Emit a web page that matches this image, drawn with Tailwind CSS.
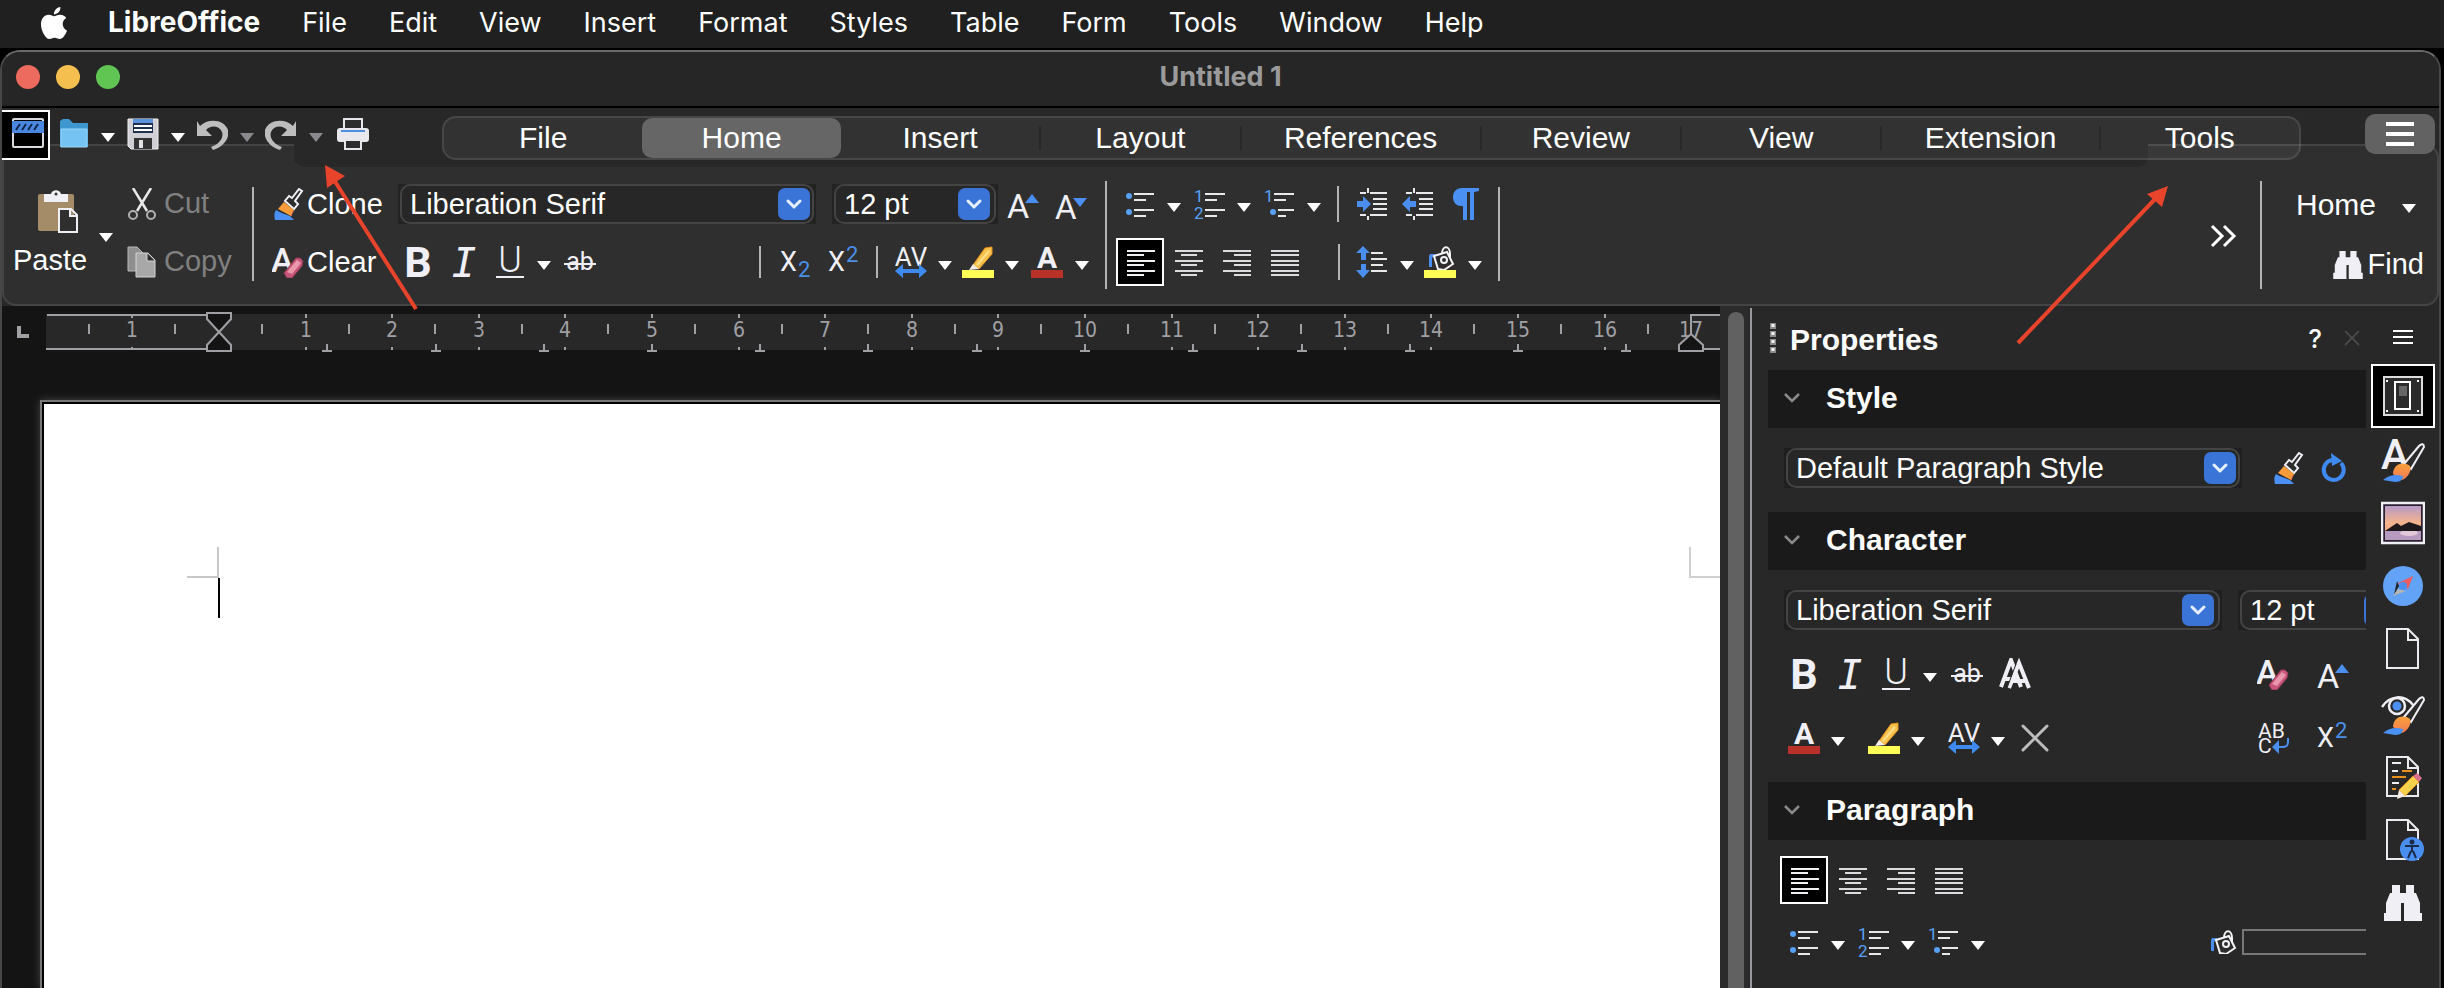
<!DOCTYPE html>
<html lang="en">
<head>
<meta charset="utf-8">
<title>Untitled 1 - LibreOffice Writer</title>
<script src="https://cdn.jsdelivr.net/npm/@tailwindcss/browser@4"></script>
</head>
<body class="flex h-screen flex-col overflow-hidden bg-black font-['Liberation_Sans',Arial,sans-serif] text-white">

<!-- Gradients live in a rendered svg so that they resolve; symbols can stay hidden -->
<svg class="absolute size-0" aria-hidden="true">
  <defs>
    <linearGradient id="sky" x1="0" y1="0" x2="0" y2="1"><stop offset="0" stop-color="#b79ac8"/><stop offset=".65" stop-color="#f5b48c"/><stop offset="1" stop-color="#f3a77f"/></linearGradient>
    <linearGradient id="brushfill" x1="0" y1="0" x2="0" y2="1"><stop offset="0" stop-color="#f9a13a"/><stop offset="1" stop-color="#f07a55"/></linearGradient>
  </defs>
</svg>
<svg class="hidden" aria-hidden="true">
  <symbol id="drop" viewBox="0 0 14 32"><path fill="currentColor" d="M0 15h14l-7 9z"/></symbol>
  <symbol id="bold" viewBox="0 0 32 32"><text x="16" y="31" text-anchor="middle" font-family="Roboto" font-weight="700" font-size="43" fill="#f0eff6">B</text></symbol>
  <symbol id="italic" viewBox="0 0 32 32"><text x="16" y="31" text-anchor="middle" font-family="DejaVu Sans Mono" font-style="italic" font-size="41" fill="#f0eff6">I</text></symbol>
  <symbol id="under" viewBox="0 0 32 32"><text x="16" y="26" text-anchor="middle" font-family="Roboto" font-weight="300" font-size="36" fill="#f0eff6">U</text><path d="M2 31h28" stroke="#f0eff6" stroke-width="2"/></symbol>
  <symbol id="strike" viewBox="0 0 32 32"><text x="16" y="24" text-anchor="middle" font-family="Roboto" font-size="25" fill="#f0eff6">ab</text><path d="M0 18h32" stroke="#f0eff6" stroke-width="2"/></symbol>
  <symbol id="sub" viewBox="0 0 32 32"><text x="0" y="25" font-family="Roboto" font-size="27" fill="#f0eff6">X</text><text x="18" y="31" font-family="Roboto" font-size="22" fill="#4a8fe8">2</text></symbol>
  <symbol id="sup" viewBox="0 0 32 32"><text x="0" y="25" font-family="Roboto" font-size="27" fill="#f0eff6">X</text><text x="18" y="16" font-family="Roboto" font-size="22" fill="#4a8fe8">2</text></symbol>
  <symbol id="kern" viewBox="0 0 32 32"><text x="16" y="20" text-anchor="middle" font-family="Roboto" font-size="26" fill="#f0eff6">AV</text><path fill="#3f8af0" d="M0 25l8-7v5h16v-5l8 7-8 7v-5H8v5z"/></symbol>
  <symbol id="mark" viewBox="0 0 32 32"><path fill="#f8c24e" stroke="#e8921e" d="M23 2l7-1v7L17 23l-6-4z"/><path stroke="#ffe08a" stroke-width="2" d="M27 5L15 19"/><path fill="#f6eee6" d="M11 18l6 5-10 1z"/><path fill="#fdfd55" d="M0 24h32v8H0z"/></symbol>
  <symbol id="colorA" viewBox="0 0 32 32"><text x="16" y="22" text-anchor="middle" font-family="Roboto" font-weight="700" font-size="30" fill="#f0eff6">A</text><path fill="#b8322a" d="M0 24h32v8H0z"/></symbol>
  <symbol id="grow" viewBox="0 0 32 32"><text x="0" y="30" font-family="Roboto" font-size="34" fill="#f0eff6">A</text><path fill="#4a8ff0" d="M18 15l7-9 7 9z"/></symbol>
  <symbol id="shrink" viewBox="0 0 32 32"><text x="0" y="31" font-family="Roboto" font-size="33" fill="#f0eff6">A</text><path fill="#4a8ff0" d="M18 10h14l-7 9z"/></symbol>
  <symbol id="bullets" viewBox="0 0 32 32"><g fill="#58a0f5"><circle cx="5" cy="8" r="3"/><circle cx="5" cy="24" r="3"/></g><path stroke="#e9e9ec" stroke-width="2" d="M10 6h20M10 12h12M10 22h20M10 28h12"/></symbol>
  <symbol id="numbers" viewBox="0 0 32 32"><g font-family="Roboto" font-size="17" fill="#58a0f5"><text x="0" y="14">1</text><text x="0" y="31">2</text></g><path stroke="#e9e9ec" stroke-width="2" d="M11 6h20M11 12h12M11 22h20M11 28h12"/></symbol>
  <symbol id="outline" viewBox="0 0 32 32"><text x="0" y="14" font-family="Roboto" font-size="17" fill="#58a0f5">1</text><circle cx="9" cy="24" r="3" fill="#58a0f5"/><path stroke="#e9e9ec" stroke-width="2" d="M10 6h20M10 12h12M14 22h16M14 28h8"/></symbol>
  <symbol id="indent" viewBox="0 0 32 32"><path stroke="#e9e9ec" stroke-width="2" d="M4 5h6M14 5h17M17 11h14M17 16h14M17 21h14M4 27h6M14 27h17M12 0v5M12 28v4"/><path fill="#4a8ff0" d="M1 13h6V8l8 8-8 8v-5H1z"/></symbol>
  <symbol id="outdent" viewBox="0 0 32 32"><path stroke="#e9e9ec" stroke-width="2" d="M4 5h6M14 5h17M17 11h14M17 16h14M17 21h14M4 27h6M14 27h17M12 0v5M12 28v4"/><path fill="#4a8ff0" d="M14 13H8V8l-8 8 8 8v-5h6z"/></symbol>
  <symbol id="pilcrow" viewBox="0 0 32 32"><path fill="#4a90f2" d="M29 0v3l-5 1v28h-4V4h-3v28h-4V18h-2C6 18 3 14 3 9s3-9 9-9z"/></symbol>
  <symbol id="al" viewBox="0 0 32 32"><path stroke="#efeff2" stroke-width="2" d="M3 5h28M3 9h17M3 15h28M3 19h17M3 25h28M3 29h17"/></symbol>
  <symbol id="ac" viewBox="0 0 32 32"><path stroke="#dcdcdf" stroke-width="2" d="M3 5h28M9 9h16M3 15h28M9 19h16M3 25h28M9 29h16"/></symbol>
  <symbol id="ar" viewBox="0 0 32 32"><path stroke="#dcdcdf" stroke-width="2" d="M3 5h28M14 9h17M3 15h28M14 19h17M3 25h28M14 29h17"/></symbol>
  <symbol id="aj" viewBox="0 0 32 32"><path stroke="#dcdcdf" stroke-width="2" d="M3 5h28M3 9h28M3 15h28M3 19h28M3 25h28M3 29h28"/></symbol>
  <symbol id="spacing" viewBox="0 0 32 32"><path fill="#4a8ff0" d="M7 0l7 7h-4v7H5V7H0zM7 32l7-8h-4v-6H5v6H0z"/><path stroke="#e9e9ec" stroke-width="2" d="M15 7h12M15 13h16M15 19h12M15 25h16"/></symbol>
  <symbol id="bucketTop" viewBox="0 0 32 24"><path fill="#4a8ff0" d="M6 8h6l-4 4v9H5V10z"/><path fill="#2d2d2d" stroke="#f4f4f6" stroke-width="2" d="M10 10l13-4 6 12-9 6-6-1z"/><path fill="none" stroke="#f4f4f6" stroke-width="2" d="M18 8c0-9 8-9 8 0v4"/><circle cx="20" cy="14" r="3" fill="none" stroke="#f4f4f6" stroke-width="2"/></symbol>
  <symbol id="brush" viewBox="0 0 32 32"><path fill="#2d2d2d" stroke="#f0eff6" stroke-width="2" d="M27 1l3 2-7 10 3 3-4 5-9-8 4-5 3 2z"/><path fill="#f69b39" d="M12 14l10 8-3 6-13-7z"/><path stroke="#f06a58" d="M21 23l-2 5"/><path fill="#4a90f5" d="M4 22c5 3 9 4 14 6l4 4H3c-1-4-1-7 1-10z"/></symbol>
  <symbol id="clearA" viewBox="0 0 32 32"><text x="-1" y="26" font-family="Roboto" font-weight="500" font-size="34" fill="#f0eff6">A</text><path fill="#c8567a" stroke="#8f3a55" d="M12 27l12-15h4l3 3-1 5-10 12h-5z"/><path fill="#e998ac" d="M15 26l10-12 4 3-9 11z"/></symbol>
  <symbol id="paste" viewBox="0 0 48 44"><rect x="5" y="5" width="36" height="37" rx="2" fill="#a58c69"/><path fill="#f0eff6" d="M11 5h7c1-5 9-5 10 0h7v8H11z"/><circle cx="23" cy="5" r="1.500" fill="#333"/><path fill="#2f2f2f" stroke="#f0eff6" stroke-width="2" d="M26 20h12l6 6v17H26zM37 20v7h7"/></symbol>
  <symbol id="cut" viewBox="0 0 32 32"><path stroke="#e8e8ea" stroke-width="2.500" d="M7 0l14 23M25 0L11 23"/><circle cx="7" cy="27" r="4" fill="none" stroke="#b0b0b0" stroke-width="2"/><circle cx="25" cy="27" r="4" fill="none" stroke="#b0b0b0" stroke-width="2"/></symbol>
  <symbol id="copy" viewBox="0 0 32 32"><path fill="#8e8e8e" stroke="#b9b9b9" d="M2 1h9l6 6v18H2z"/><path fill="#a8a8a8" stroke="#d4d4d4" d="M10 7h12l7 7v17H10zM21 7v8h8"/></symbol>
  <symbol id="binoc" viewBox="0 0 38 36"><path fill="#f0eff6" d="M8 0h8v8h6V0h8v8h2l4 10v10h2v8H20V18h-3v18H0v-8h2V18L6 8h2z"/></symbol>
  <symbol id="chev" viewBox="0 0 32 32"><path fill="none" stroke="#e6efff" stroke-width="3" stroke-linecap="round" stroke-linejoin="round" d="M10 13l6 6 6-6"/></symbol>
  <symbol id="fold" viewBox="0 0 16 12"><path fill="none" stroke="#8a8a8a" stroke-width="2.500" d="M1 2l7 7 7-7"/></symbol>
</svg>

<!-- macOS menu bar -->
<nav aria-label="Menu bar" class="flex h-12 shrink-0 items-center bg-[#202020] pb-[3px] pl-[38px] font-['Inter',sans-serif] text-[27px]">
  <a href="#" aria-label="Apple" class="mr-[38px]"><svg class="size-8" viewBox="0 0 24 24"><path fill="#fff" d="M12.152 6.896c-.948 0-2.415-1.078-3.960-1.040-2.040.027-3.910 1.183-4.961 3.014-2.117 3.675-.546 9.103 1.519 12.090 1.013 1.454 2.208 3.090 3.792 3.039 1.520-.065 2.090-.987 3.935-.987 1.831 0 2.350.987 3.960.948 1.637-.026 2.676-1.480 3.676-2.948 1.156-1.688 1.636-3.325 1.662-3.415-.039-.013-3.182-1.221-3.220-4.857-.026-3.040 2.480-4.494 2.597-4.559-1.429-2.090-3.623-2.324-4.390-2.376-2-.156-3.675 1.090-4.610 1.090zM15.530 3.830c.843-1.012 1.400-2.427 1.245-3.830-1.207.052-2.662.805-3.532 1.818-.780.896-1.454 2.338-1.273 3.714 1.338.104 2.715-.688 3.559-1.701"/></svg></a>
  <div class="flex items-baseline gap-[42px]">
    <a href="#" class="text-[28px] font-bold">LibreOffice</a><a href="#">File</a><a href="#">Edit</a><a href="#">View</a><a href="#">Insert</a><a href="#">Format</a><a href="#">Styles</a><a href="#">Table</a><a href="#">Form</a><a href="#">Tools</a><a href="#">Window</a><a href="#">Help</a>
  </div>
</nav>

<!-- Application window -->
<div class="relative mt-[2px] mr-[3px] flex min-h-0 flex-1 flex-col overflow-hidden rounded-t-[20px] border-x-2 border-t-2 border-x-[#474747] border-t-[#6a6a6a] bg-[#282828]">

  <header class="grid h-14 shrink-0 grid-cols-[1fr_auto_1fr] items-center border-b-2 border-black bg-[#262626] px-[14px] pb-1">
    <div class="flex gap-4">
      <button aria-label="Close" class="size-6 rounded-full bg-[#ec6a5e]"></button>
      <button aria-label="Minimize" class="size-6 rounded-full bg-[#f4bf4f]"></button>
      <button aria-label="Zoom" class="size-6 rounded-full bg-[#61c554]"></button>
    </div>
    <h1 class="font-['Inter',sans-serif] text-[27px] font-bold text-[#9b9b9b]">Untitled 1</h1>
  </header>

  <section aria-label="Notebookbar" class="relative shrink-0">
    <div class="absolute inset-x-0 top-9 bottom-0 rounded-[14px] border-2 border-[#444] bg-[#2f2f2f]"></div>
    <div class="absolute top-9 right-[291px] left-[292px] h-[23px] rounded-b-[10px] bg-[#282828]"></div>

    <!-- Quick access and tabs -->
    <div class="relative flex items-start pt-[2px]">
      <div class="-ml-[2px] flex w-[442px] shrink-0 items-start">
        <button aria-label="Templates" class="flex size-[50px] shrink-0 items-center justify-center border-2 border-white bg-black pb-1 pl-1.5"><svg class="h-[30px] w-8" viewBox="0 0 32 30"><rect x="1" y="1" width="30" height="28" rx="1" fill="none" stroke="#dcd9de" stroke-width="2"/><path fill="#4a88e0" d="M0 3h32v12H0z"/><path stroke="#10254d" stroke-width="2" d="M4 12l4-6M10 12l4-6M16 12l4-6M22 12l4-6"/></svg></button>
        <button aria-label="Open" class="mt-2 ml-2 flex items-center gap-[11px]"><svg class="size-8" viewBox="0 0 32 32"><path fill="#3f97cf" d="M2 3l3-2h6l4 4h15v24H2z"/><path fill="#74c3f2" stroke="#9ad6f8" d="M3 11h26v18H3z"/></svg><svg class="h-8 w-[14px]"><use href="#drop"/></svg></button>
        <button aria-label="Save" class="mt-2 ml-3 flex items-center gap-3"><svg class="size-8" viewBox="0 0 32 32"><path fill="#d0cfd6" stroke="#f0f0f3" d="M1 1h30v30H4l-3-3z"/><path fill="#20304f" d="M6 2h20v13H6z"/><path fill="#5d92dc" d="M6 1h20v4H6z"/><path stroke="#fff" stroke-width="2" d="M7 8h18M7 12h18"/><path fill="#333" d="M7 20h18v11H7z"/><path fill="#e4e4e8" d="M12 22h4v8h-4z"/></svg><svg class="h-8 w-[14px]"><use href="#drop"/></svg></button>
        <button aria-label="Undo" disabled class="mt-2 ml-[11px] flex items-center gap-3 text-[#8a8a8e]"><svg class="size-8" viewBox="0 0 32 32"><path fill="#bdbdbd" d="M1 3l3 5C12 0 28 1 32 12c2 9-5 17-15 20l-2-3c8-3 13-9 11-15C23 7 14 7 10 12l6 6H1z"/></svg><svg class="h-8 w-[14px]"><use href="#drop"/></svg></button>
        <button aria-label="Redo" disabled class="mt-2 ml-[11px] flex items-center gap-3 text-[#8a8a8e]"><svg class="size-8" viewBox="0 0 32 32"><path fill="#bdbdbd" d="M31 3l-3 5C20 0 4 1 0 12c-2 9 5 17 15 20l2-3C9 26 4 20 6 14 9 7 18 7 22 12l-6 6h15z"/></svg><svg class="h-8 w-[14px]"><use href="#drop"/></svg></button>
        <button aria-label="Print" class="mt-2 ml-3.5"><svg class="size-8" viewBox="0 0 32 32"><path fill="#2d2d2d" stroke="#e8e6ea" stroke-width="2" d="M7 1h18v13H7z"/><rect x="0" y="10" width="32" height="14" rx="3" fill="#e8e8ee"/><path stroke="#4c8fe0" stroke-width="2" d="M4 13h24"/><path fill="#2d2d2d" stroke="#e8e6ea" stroke-width="2" d="M8 22h16v9H8z"/></svg></button>
      </div>
      <div role="tablist" class="mt-[6px] flex h-11 grow items-center rounded-[14px] border-2 border-white/10 bg-white/5 text-[30px]">
        <button role="tab" class="h-6 basis-0 grow-[200] leading-6">File</button>
        <button role="tab" aria-selected="true" class="h-10 basis-0 grow-[200] rounded-[10px] bg-[#666] leading-6">Home</button>
        <button role="tab" class="h-6 basis-0 grow-[200] border-r-2 border-black/20 leading-6">Insert</button>
        <button role="tab" class="h-6 basis-0 grow-[200] border-r-2 border-black/20 leading-6">Layout</button>
        <button role="tab" class="h-6 basis-0 grow-[240] border-r-2 border-black/20 leading-6">References</button>
        <button role="tab" class="h-6 basis-0 grow-[200] border-r-2 border-black/20 leading-6">Review</button>
        <button role="tab" class="h-6 basis-0 grow-[200] border-r-2 border-black/20 leading-6">View</button>
        <button role="tab" class="h-6 basis-0 grow-[218] border-r-2 border-black/20 leading-6">Extension</button>
        <button role="tab" class="h-6 basis-0 grow-[200] leading-6">Tools</button>
      </div>
      <button aria-label="Menu" class="mt-1 mr-1 ml-16 flex h-10 w-[70px] shrink-0 flex-col items-center justify-center gap-1.5 rounded-[10px] bg-[#626262]"><span class="h-1 w-7 bg-white"></span><span class="h-1 w-7 bg-white"></span><span class="h-1 w-7 bg-white"></span></button>
    </div>

    <!-- Home tab tools -->
    <div class="relative flex h-[146px] items-start pt-[15px] text-[29px]">
      <button class="mt-3.5 ml-1 flex w-[88px] flex-col items-center leading-8"><svg class="ml-3.5 h-11 w-12"><use href="#paste"/></svg><span class="mt-[11px]">Paste</span></button>
      <button aria-label="Paste options" class="mt-[43px] ml-[5px]"><svg class="h-8 w-[14px]"><use href="#drop"/></svg></button>
      <div class="ml-[13px] flex w-[126px] flex-col text-[#808080]">
        <button disabled class="flex h-[58px] items-center gap-[6px]"><svg class="size-8"><use href="#cut"/></svg>Cut</button>
        <button disabled class="flex h-[58px] items-center gap-[6px]"><svg class="size-8"><use href="#copy"/></svg>Copy</button>
      </div>
      <div class="mt-3 h-[94px] w-[2px] bg-[#b4b4b4]"></div>
      <div class="ml-[18px] flex w-[126px] flex-col">
        <button class="flex h-[58px] items-center gap-[3px]"><svg class="size-8"><use href="#brush"/></svg><span class="pt-[2px]">Clone</span></button>
        <button class="flex h-[58px] items-center gap-[3px]"><svg class="size-8"><use href="#clearA"/></svg><span class="pt-[2px]">Clear</span></button>
      </div>

      <div class="flex flex-col">
        <div class="flex h-[58px] items-center">
          <div class="relative w-[418px] bg-[#232323] px-[2px]"><select aria-label="Font name" class="block h-10 w-full appearance-none rounded-[10px] border-2 border-[#444] bg-[#272727] pl-[8px] leading-9"><option>Liberation Serif</option></select><svg class="pointer-events-none absolute top-1 right-1.5 size-8 rounded-[7px] bg-[#3a74d6]"><use href="#chev"/></svg></div>
          <div class="relative ml-4 w-[166px] bg-[#232323] px-[2px]"><select aria-label="Font size" class="block h-10 w-full appearance-none rounded-[10px] border-2 border-[#444] bg-[#272727] pl-[8px] leading-9"><option>12 pt</option></select><svg class="pointer-events-none absolute top-1 right-2 size-8 rounded-[7px] bg-[#3a74d6]"><use href="#chev"/></svg></div>
          <button aria-label="Increase size" class="ml-[9px]"><svg class="size-8"><use href="#grow"/></svg></button>
          <button aria-label="Decrease size" class="ml-4"><svg class="size-8"><use href="#shrink"/></svg></button>
        </div>
        <div class="flex h-[58px] items-center pl-1">
          <button aria-label="Bold"><svg class="size-8"><use href="#bold"/></svg></button>
          <button aria-label="Italic" class="ml-3.5"><svg class="size-8"><use href="#italic"/></svg></button>
          <button aria-label="Underline" class="ml-3.5 flex gap-[11px]"><svg class="size-8"><use href="#under"/></svg><svg class="h-8 w-[14px]"><use href="#drop"/></svg></button>
          <button aria-label="Strikethrough" class="ml-[13px]"><svg class="size-8"><use href="#strike"/></svg></button>
          <div class="ml-[163px] h-8 w-[2px] bg-[#b4b4b4]"></div>
          <button aria-label="Subscript" class="ml-[19px]"><svg class="size-8"><use href="#sub"/></svg></button>
          <button aria-label="Superscript" class="ml-4"><svg class="size-8"><use href="#sup"/></svg></button>
          <div class="ml-4 h-8 w-[2px] bg-[#b4b4b4]"></div>
          <button aria-label="Character spacing" class="ml-[17px] flex gap-[11px]"><svg class="size-8"><use href="#kern"/></svg><svg class="h-8 w-[14px]"><use href="#drop"/></svg></button>
          <button aria-label="Highlighting" class="ml-[10px] flex gap-[11px]"><svg class="size-8"><use href="#mark"/></svg><svg class="h-8 w-[14px]"><use href="#drop"/></svg></button>
          <button aria-label="Font color" class="ml-[12px] flex gap-3"><svg class="size-8"><use href="#colorA"/></svg><svg class="h-8 w-[14px]"><use href="#drop"/></svg></button>
        </div>
      </div>
      <div class="mt-1.5 ml-4 h-[108px] w-[2px] bg-[#b4b4b4]"></div>

      <div class="ml-[9px] flex flex-col">
        <div class="flex h-[58px] items-center pl-2">
          <button aria-label="Bullets" class="flex gap-[11px]"><svg class="size-8"><use href="#bullets"/></svg><svg class="h-8 w-[14px]"><use href="#drop"/></svg></button>
          <button aria-label="Numbering" class="ml-[13px] flex gap-[11px]"><svg class="size-8"><use href="#numbers"/></svg><svg class="h-8 w-[14px]"><use href="#drop"/></svg></button>
          <button aria-label="Outline" class="ml-[13px] flex gap-[11px]"><svg class="size-8"><use href="#outline"/></svg><svg class="h-8 w-[14px]"><use href="#drop"/></svg></button>
          <div class="ml-4 h-9 w-[2px] bg-[#b4b4b4]"></div>
          <button aria-label="Increase indent" class="ml-[17px]"><svg class="size-8"><use href="#indent"/></svg></button>
          <button aria-label="Decrease indent" class="ml-3.5"><svg class="size-8"><use href="#outdent"/></svg></button>
          <button aria-label="Formatting marks" class="ml-4"><svg class="size-8"><use href="#pilcrow"/></svg></button>
        </div>
        <div class="flex h-[58px] items-center">
          <button aria-label="Align left" aria-pressed="true" class="flex size-12 items-center justify-center border-2 border-white bg-black"><svg class="size-8"><use href="#al"/></svg></button>
          <button aria-label="Center" class="flex size-12 items-center justify-center"><svg class="size-8"><use href="#ac"/></svg></button>
          <button aria-label="Align right" class="flex size-12 items-center justify-center"><svg class="size-8"><use href="#ar"/></svg></button>
          <button aria-label="Justify" class="flex size-12 items-center justify-center"><svg class="size-8"><use href="#aj"/></svg></button>
          <div class="ml-[30px] h-9 w-[2px] bg-[#b4b4b4]"></div>
          <button aria-label="Line spacing" class="ml-4 flex gap-3"><svg class="size-8"><use href="#spacing"/></svg><svg class="h-8 w-[14px]"><use href="#drop"/></svg></button>
          <button aria-label="Background color" class="ml-[10px] flex gap-3"><svg class="size-8" viewBox="0 0 32 32"><use href="#bucketTop" width="32" height="24"/><path fill="#fdfd55" d="M0 24h32v8H0z"/></svg><svg class="h-8 w-[14px]"><use href="#drop"/></svg></button>
        </div>
      </div>
      <div class="mt-3 ml-4 h-[94px] w-[2px] bg-[#b4b4b4]"></div>

      <button aria-label="More" class="mt-11 ml-auto"><svg class="size-8" viewBox="0 0 32 32"><path fill="none" stroke="#fff" stroke-width="3" d="M5 7l10 10L5 27M17 7l10 10-10 10"/></svg></button>
      <div class="mt-1.5 ml-[21px] h-[108px] w-[2px] bg-[#b4b4b4]"></div>
      <div class="mt-[2px] flex w-[177px] flex-col pr-[15px]">
        <button class="flex h-[58px] items-center justify-end gap-[26px] pr-2 pb-[3px] text-[30px]">Home<svg class="h-8 w-[14px]"><use href="#drop"/></svg></button>
        <button class="flex h-[58px] items-center justify-end gap-[5px] pt-[2px]"><svg class="h-7 w-[30px]"><use href="#binoc"/></svg>Find</button>
      </div>
    </div>
  </section>

  <div class="flex min-h-0 flex-1">
    <!-- Document -->
    <main class="flex min-w-0 flex-1 flex-col bg-[#141414]">
      <svg id="ruler" class="h-12 w-full shrink-0" role="img" aria-label="Ruler"></svg>
      <div class="flex min-h-0 flex-1 flex-col pt-[46px] pl-[38px]">
        <div class="flex-1 border-t-2 border-l-2 border-[#777] bg-black pt-[2px] pl-[2px] shadow-[0_0_8px_#444]">
          <article contenteditable="true" aria-label="Document page" class="h-full bg-white pt-[143px] outline-none">
            <div class="flex justify-between pl-[143px]">
              <div class="h-[31px] w-8 bg-[linear-gradient(#c8c8c8,#c8c8c8),linear-gradient(#c8c8c8,#c8c8c8)] bg-[length:2px_100%,100%_2px] bg-[position:right_top,left_bottom] bg-no-repeat"></div>
              <div class="h-[31px] w-[31px] border-b-2 border-l-2 border-[#d0d0d0]"></div>
            </div>
            <div class="ml-[174px] h-10 w-[2px] bg-black"></div>
          </article>
        </div>
      </div>
    </main>

    <div class="flex w-7 shrink-0 justify-center bg-[#2b2b2b] pt-1.5 pr-1 pl-2"><div class="w-4 rounded-t-full bg-[#616161]"></div></div>
    <div class="mt-[2px] mr-0.5 ml-[2px] w-[2px] shrink-0 bg-[#9a9a9e]"></div>

    <!-- Sidebar -->
    <aside aria-label="Properties" class="flex w-[685px] shrink-0">
      <div class="flex min-w-0 flex-1 flex-col overflow-hidden pl-[14px]">
        <div class="flex h-16 shrink-0 items-center">
          <svg class="h-8 w-2" viewBox="0 0 8 32"><path stroke="#8a8a8a" stroke-width="6" stroke-dasharray="6 2" d="M5 1v31"/><path stroke="#f0f0f0" stroke-width="3" stroke-dasharray="3 5" d="M5 2v30"/></svg>
          <h2 class="ml-3.5 grow pt-[2px] text-[30px] font-bold">Properties</h2>
          <button aria-label="Help" class="font-['Inter',sans-serif] text-[26px] font-medium">?</button>
          <button aria-label="Close sidebar" class="mr-1 ml-5"><svg class="size-5" viewBox="0 0 20 20"><path stroke="#484848" stroke-width="2" d="M3 3l14 14M17 3L3 17"/></svg></button>
        </div>

        <h3 class="shrink-0 bg-[#1a1a1a]"><button class="flex h-[58px] w-full items-center gap-[26px] pb-[3px] pl-4 text-[30px] font-bold"><svg class="h-3 w-4"><use href="#fold"/></svg>Style</button></h3>
        <div class="flex h-[84px] shrink-0 items-start pt-5 pl-4 text-[29px]">
          <div class="relative w-[458px] bg-[#1f1f1f] px-[2px]"><select aria-label="Paragraph style" class="block h-10 w-full appearance-none rounded-[10px] border-2 border-[#444] bg-[#272727] pl-[8px] leading-9"><option>Default Paragraph Style</option></select><svg class="pointer-events-none absolute top-1 right-1.5 size-8 rounded-[7px] bg-[#3a74d6]"><use href="#chev"/></svg></div>
          <button aria-label="New style" class="mt-1 ml-[30px]"><svg class="size-8"><use href="#brush"/></svg></button>
          <button aria-label="Update style" class="mt-1 ml-[14px]"><svg class="size-8" viewBox="0 0 32 32"><path fill="none" stroke="#3f8af0" stroke-width="4" d="M23 11a10 10 0 1 1-9-3"/><path fill="#3f8af0" d="M13 1l11 8-10 5z"/></svg></button>
        </div>

        <h3 class="shrink-0 bg-[#1a1a1a]"><button class="flex h-[58px] w-full items-center gap-[26px] pb-[3px] pl-4 text-[30px] font-bold"><svg class="h-3 w-4"><use href="#fold"/></svg>Character</button></h3>
        <div class="flex h-[212px] shrink-0 flex-col pt-5 pl-4 text-[29px]">
          <div class="flex">
            <div class="relative w-[438px] shrink-0 bg-[#1f1f1f] px-[2px]"><select aria-label="Sidebar font name" class="block h-10 w-full appearance-none rounded-[10px] border-2 border-[#444] bg-[#272727] pl-[8px] leading-9"><option>Liberation Serif</option></select><svg class="pointer-events-none absolute top-1 right-2 size-8 rounded-[7px] bg-[#3a74d6]"><use href="#chev"/></svg></div>
            <div class="relative ml-4 w-[166px] shrink-0 bg-[#1f1f1f] px-[2px]"><select aria-label="Sidebar font size" class="block h-10 w-full appearance-none rounded-[10px] border-2 border-[#444] bg-[#272727] pl-[8px] leading-9"><option>12 pt</option></select><svg class="pointer-events-none absolute top-1 right-2 size-8 rounded-[7px] bg-[#3a74d6]"><use href="#chev"/></svg></div>
          </div>
          <div class="mt-7 flex pr-[17px] pl-1">
            <button aria-label="Bold"><svg class="size-8"><use href="#bold"/></svg></button>
            <button aria-label="Italic" class="ml-3.5"><svg class="size-8"><use href="#italic"/></svg></button>
            <button aria-label="Underline" class="ml-3.5 flex gap-[11px]"><svg class="size-8"><use href="#under"/></svg><svg class="h-8 w-[14px]"><use href="#drop"/></svg></button>
            <button aria-label="Strikethrough" class="ml-3.5"><svg class="size-8"><use href="#strike"/></svg></button>
            <button aria-label="Shadow" class="ml-4"><svg class="size-8" viewBox="0 0 32 32"><path fill="none" stroke="#f0eff6" stroke-width="4" d="M2 29L12 2l10 27M6 21h12"/><path fill="none" stroke="#f0eff6" stroke-width="4" d="M10 30l10-25 10 25M13 23h14"/><path stroke="#282828" d="M8 30l9-24"/></svg></button>
            <button aria-label="Clear formatting" class="ml-auto"><svg class="size-8"><use href="#clearA"/></svg></button>
            <button aria-label="Increase size" class="ml-7"><svg class="size-8"><use href="#grow"/></svg></button>
          </div>
          <div class="mt-8 flex pr-[17px] pl-1">
            <button aria-label="Font color" class="flex gap-[11px]"><svg class="size-8"><use href="#colorA"/></svg><svg class="h-8 w-[14px]"><use href="#drop"/></svg></button>
            <button aria-label="Highlighting" class="ml-[23px] flex gap-[11px]"><svg class="size-8"><use href="#mark"/></svg><svg class="h-8 w-[14px]"><use href="#drop"/></svg></button>
            <button aria-label="Character spacing" class="ml-[23px] flex gap-[11px]"><svg class="size-8"><use href="#kern"/></svg><svg class="h-8 w-[14px]"><use href="#drop"/></svg></button>
            <button aria-label="No fill" class="ml-3.5"><svg class="size-8" viewBox="0 0 32 32"><path stroke="#bdbdbd" stroke-width="3" stroke-linecap="round" d="M4 4l24 24M28 4L4 28"/></svg></button>
            <button aria-label="Wrap text" class="ml-auto"><svg class="size-8" viewBox="0 0 32 32"><g font-family="Roboto" font-size="21" fill="#f0eff6"><text x="1" y="16">AB</text><text x="1" y="31">C</text></g><path fill="none" stroke="#4a8ff0" stroke-width="2" d="M31 16v4c0 4-2 5-6 5h-4"/><path fill="#4a8ff0" d="M15 25l7-7v14z"/></svg></button>
            <button aria-label="Superscript" class="ml-7"><svg class="size-8"><use href="#sup"/></svg></button>
          </div>
        </div>

        <h3 class="shrink-0 bg-[#1a1a1a]"><button class="flex h-[58px] w-full items-center gap-[26px] pb-[3px] pl-4 text-[30px] font-bold"><svg class="h-3 w-4"><use href="#fold"/></svg>Paragraph</button></h3>
        <div class="flex shrink-0 flex-col gap-[22px] pt-4">
          <div class="flex pl-3">
            <button aria-label="Align left" aria-pressed="true" class="flex size-12 items-center justify-center border-2 border-white bg-black"><svg class="size-8"><use href="#al"/></svg></button>
            <button aria-label="Center" class="flex size-12 items-center justify-center"><svg class="size-8"><use href="#ac"/></svg></button>
            <button aria-label="Align right" class="flex size-12 items-center justify-center"><svg class="size-8"><use href="#ar"/></svg></button>
            <button aria-label="Justify" class="flex size-12 items-center justify-center"><svg class="size-8"><use href="#aj"/></svg></button>
          </div>
          <div class="flex items-center pl-5">
            <button aria-label="Bullets" class="flex gap-[11px]"><svg class="size-8"><use href="#bullets"/></svg><svg class="h-8 w-[14px]"><use href="#drop"/></svg></button>
            <button aria-label="Numbering" class="ml-[13px] flex gap-[11px]"><svg class="size-8"><use href="#numbers"/></svg><svg class="h-8 w-[14px]"><use href="#drop"/></svg></button>
            <button aria-label="Outline" class="ml-[13px] flex gap-[11px]"><svg class="size-8"><use href="#outline"/></svg><svg class="h-8 w-[14px]"><use href="#drop"/></svg></button>
            <label for="fill" class="ml-auto"><svg class="h-6 w-8" role="img" aria-label="Background color"><use href="#bucketTop"/></svg></label>
            <input id="fill" class="ml-1 h-[26px] w-[124px] border-2 border-r-0 border-[#777] bg-transparent">
          </div>
        </div>
      </div>

      <nav aria-label="Sidebar decks" class="flex w-[73px] shrink-0 flex-col items-center">
        <button aria-label="Sidebar settings" class="flex h-[58px] w-16 items-center justify-center pt-1"><svg class="h-4 w-5" viewBox="0 0 20 16"><path stroke="#fff" stroke-width="2" d="M0 2h20M0 8h20M0 14h20"/></svg></button>
        <button aria-label="Properties" class="flex size-16 shrink-0 items-center justify-center border-2 border-white bg-black"><svg class="size-10" viewBox="0 0 40 40"><rect x="1" y="1" width="38" height="38" fill="#2b2b2b" stroke="#dcdcde" stroke-width="2"/><rect x="12" y="6" width="15" height="27" fill="#2b2b2b" stroke="#fff" stroke-width="2"/><path fill="#666" d="M16 10h8v10h-8z"/><path fill="#fff" d="M3 4h2v2H3zM34 4h2v2h-2zM3 34h2v2H3zM34 34h2v2h-2z"/></svg></button>
        <button aria-label="Styles" class="flex h-[63px] w-16 items-center justify-center"><svg class="size-11" viewBox="0 0 44 44"><text x="0" y="31" font-family="Roboto" font-weight="500" font-size="42" fill="#f0eff6">A</text><path fill="#2b2b2b" stroke="#f0eff6" stroke-width="2" d="M23 26L38 8c3-3 5-2 5 1L30 31z"/><path fill="url(#brushfill)" d="M12 36c0-8 8-14 17-8 2 4-2 12-8 14z"/><path fill="#4a90f5" d="M2 42c6-5 12-6 20-4 0 3-2 6-8 6z"/></svg></button>
        <button aria-label="Gallery" class="flex h-[63px] w-16 items-center justify-center"><svg class="size-11" viewBox="0 0 44 44"><rect x="1" y="2" width="42" height="40" fill="#2b2030" stroke="#f0eff6" stroke-width="2.500"/><path fill="url(#sky)" d="M4 5h36v26H4z"/><path fill="#b79ac0" d="M4 30h36v9H4z"/><ellipse cx="28" cy="32" rx="9" ry="3" fill="#e3c8d8"/><path fill="#1d191c" d="M4 30l12-8 4 3 8-4 12 4v5z"/></svg></button>
        <button aria-label="Navigator" class="flex h-[63px] w-16 items-center justify-center"><svg class="size-10" viewBox="0 0 40 40"><circle cx="20" cy="20" r="20" fill="#62a2f7"/><path fill="#ee5d5f" d="M30 10l-5 13-10-6z"/><path fill="#222" d="M14 15l2 5-5 9z"/><path fill="#b5b5b5" d="M10 30l5-7 8 2z"/><circle cx="20" cy="20" r="4" fill="#4a8ff0"/></svg></button>
        <button aria-label="Page" class="flex h-16 w-16 items-center justify-center"><svg class="h-[42px] w-[34px]" viewBox="0 0 34 42"><path fill="none" stroke="#ecebf0" stroke-width="2" d="M1 1h21l10 10v29H1zM22 1v11h10"/></svg></button>
        <button aria-label="Style inspector" class="flex h-16 w-16 items-center justify-center pt-1"><svg class="size-11" viewBox="0 0 44 44"><path fill="none" stroke="#f0eff6" stroke-width="2.500" d="M1 14C9 2 23 1 32 12"/><circle cx="16" cy="13" r="8" fill="#2b2b2b" stroke="#f0eff6" stroke-width="2.500"/><circle cx="16" cy="13" r="4.500" fill="#4a90f5"/><path fill="#2b2b2b" stroke="#f0eff6" stroke-width="2" d="M23 24L38 6c3-3 5-2 5 1L30 29z"/><path fill="url(#brushfill)" d="M12 34c0-8 8-14 17-8 2 4-2 12-8 14z"/><path fill="#4a90f5" d="M2 40c6-5 12-6 20-4 0 3-2 6-8 6z"/></svg></button>
        <button aria-label="Manage changes" class="flex h-[63px] w-16 items-center justify-center"><svg class="size-11" viewBox="0 0 44 44"><path fill="none" stroke="#ecebf0" stroke-width="2" d="M6 2h21l10 10v29H6zM27 2v11h10"/><path stroke="#f0eff6" stroke-width="2" d="M11 8h9M11 16h6M11 28h7"/><path stroke="#e8921e" stroke-width="2" d="M21 16h10M11 22h14M11 34h4"/><path fill="#fbd04b" stroke="#e8921e" d="M32 21l6 6-14 14-6-6z"/><path fill="#d9708c" d="M32 21l4-3 5 5-3 4z"/><path fill="#f6eee6" d="M18 35l6 6-8 3z"/></svg></button>
        <button aria-label="Accessibility" class="flex h-[63px] w-16 items-center justify-center"><svg class="size-11" viewBox="0 0 44 44"><path fill="none" stroke="#ecebf0" stroke-width="2" d="M6 2h21l10 10v29H6zM27 2v10h10"/><circle cx="31" cy="31" r="12" fill="#4a8ff0"/><circle cx="31" cy="24" r="2.500" fill="#1b2a4a"/><path stroke="#1b2a4a" stroke-width="2" fill="none" d="M24 28h14M31 28v6M30 33l-3 7M32 33l3 7"/></svg></button>
        <button aria-label="Find" class="flex h-[63px] w-16 items-center justify-center"><svg class="h-9 w-[38px]"><use href="#binoc"/></svg></button>
      </nav>
    </aside>
  </div>
</div>

<!-- Annotation arrows -->
<svg class="pointer-events-none absolute top-0 left-0 h-[400px] w-[440px]" viewBox="0 0 440 400"><path stroke="#e8432b" stroke-width="4" d="M334 180l82 129"/><path fill="#e8432b" d="M325 165l20 11-18 12z"/></svg>
<svg class="pointer-events-none absolute top-[180px] right-[274px] h-[170px] w-[155px]" viewBox="2015 180 155 170"><path stroke="#e8432b" stroke-width="4" d="M2156 198l-138 145"/><path fill="#e8432b" d="M2168 186l-21 8 15 13z"/></svg>

<script>
  // Ruler: zero is the left page margin, one unit per centimetre.
  const zero = 217, unit = 86.6, c = '#a0a0a4';
  let s = '<rect x="44" y="8" width="100%" height="36" fill="#282828"/>';
  s += `<path d="M12 20v10h10" fill="none" stroke="${c}" stroke-width="4" transform="translate(5 0)"/>`;
  for (let i = -1; i <= 17; i++) {
    const x = Math.round(zero + i * unit);
    if (i !== 0) s += `<path d="M${x} 8v4M${x} 41v3" stroke="${c}" stroke-width="2"/><text x="${x}" y="31" text-anchor="middle" font-family="DejaVu Sans Condensed, Liberation Sans, sans-serif" font-size="21" fill="${c}">${Math.abs(i)}</text>`;
    if (i < 17) { const h = Math.round(x + unit / 2); s += `<path d="M${h} 18v10" stroke="${c}" stroke-width="2"/>`; }
  }
  s += `<path d="M87 18v10" stroke="${c}" stroke-width="2"/>`;
  for (let k = 1; k <= 13; k++) {
    const x = Math.round(zero + k * unit * 1.25);
    s += `<path d="M${x} 38v7M${x - 5} 45h10" stroke="${c}" stroke-width="2"/>`;
  }
  s += `<path d="M45 9h160M44 43h160" stroke="${c}" stroke-width="2"/>`;
  s += `<path d="M205 7h24v6l-12 13-12-13zM217 26l12 13v6h-24v-6z" fill="#141414" stroke="${c}" stroke-width="2"/>`;
  s += `<path d="M1689 28V9h40M1700 43h30" fill="none" stroke="${c}" stroke-width="2"/><path d="M1689 28l12 11v6h-24v-6z" fill="#141414" stroke="${c}" stroke-width="2"/>`;
  document.getElementById('ruler').innerHTML = s;
</script>
</body>
</html>
